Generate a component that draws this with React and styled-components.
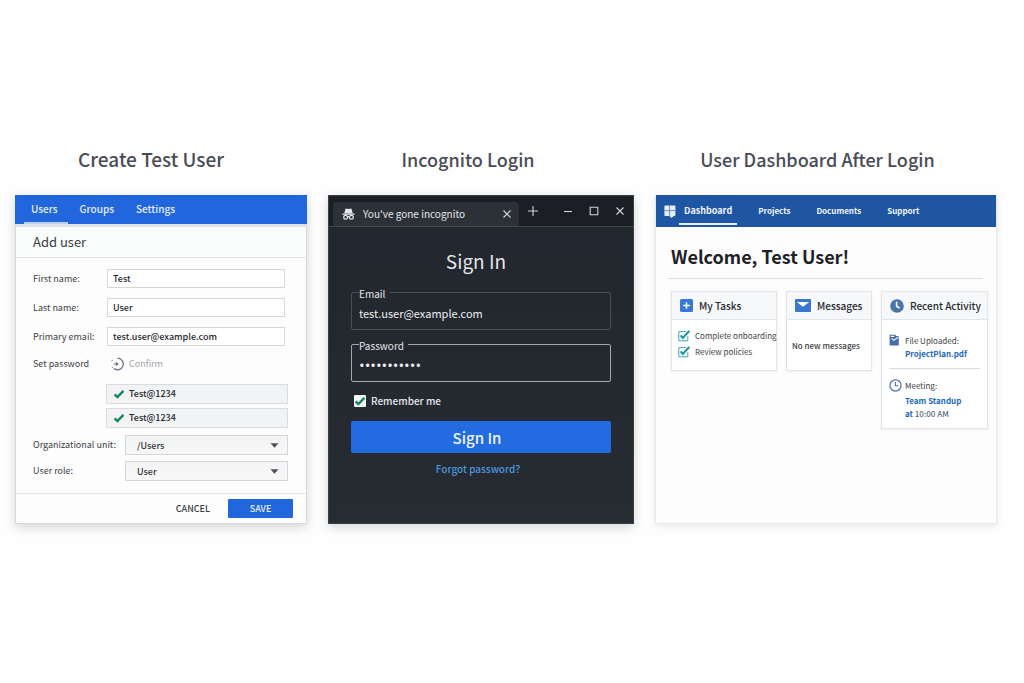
import React, {useState} from 'react'
import styled, {createGlobalStyle} from 'styled-components'

const GlobalStyle = createGlobalStyle`
  * {
    box-sizing: border-box;
  }
  body {
    margin: 0;
    background: #fefefe;
    color: #3c4043;
    font-family: "Noto Sans CJK SC", "Noto Sans", sans-serif;
    font-size: 9px;
    line-height: 16px;
  }
  button, input, select {
    font-family: inherit;
  }
  svg {
    flex-shrink: 0;
  }
`

const Page = styled.main`
  display: grid;
  grid-template-columns: 292fr 306fr 342fr;
  gap: 21px;
  align-items: start;
  min-height: 100vh;
  padding: 143px 27px 40px 15px;
`

const Column = styled.section`
  min-width: 0;
`

const Title = styled.h2`
  margin: 0 0 20px;
  padding-right: ${p => p.$inset}px;
  font-size: ${p => p.$large ? 19 : 18}px;
  font-weight: 500;
  line-height: 32px;
  text-align: center;
  color: #484c56;
`

const Panel = styled.div`
  display: flex;
  flex-direction: column;
  min-height: 329px;
  background: #fdfdfe;
  box-shadow: 0 3px 10px rgba(60, 64, 75, 0.22);
`

/* Admin console */

const AdminTabs = styled.nav`
  display: flex;
  gap: 5px;
  height: 29px;
  padding: 0 9px;
  background: #2166dc;
`

const AdminTab = styled.a`
  padding: 0 10px 0 7px;
  border-bottom: 2px solid ${p => p.$active ? '#b9d2fa' : 'transparent'};
  color: #e6effd;
  font-size: 10px;
  font-weight: 500;
  line-height: 28px;
  text-decoration: none;
`

const AdminBody = styled.form`
  display: flex;
  flex-direction: column;
  flex: 1;
  border: 1px solid #d6d8dc;
  border-top: 3px solid #dfe2e8;
`

const AdminHeading = styled.h3`
  margin: 0;
  padding: 0 17px;
  border-bottom: 1px solid #e1e3e6;
  background: #fafbfb;
  font-size: 13px;
  font-weight: 400;
  line-height: 30px;
`

const Fields = styled.div`
  display: flex;
  flex-direction: column;
  gap: 10px;
  padding: 11px 21px 0 17px;
`

const Field = styled.div`
  display: grid;
  grid-template-columns: 74px 1fr;
  align-items: center;
`

const TextInput = styled.input`
  min-width: 0;
  height: 19px;
  padding: 0 5px;
  border: 1px solid #d5d7da;
  background: #fff;
  color: #26292e;
  font-size: 9px;
  font-weight: 500;
`

const Confirm = styled.span`
  display: flex;
  align-items: center;
  gap: 5px;
  padding-left: 4px;
  color: #a2a5aa;
`

const PasswordList = styled.ul`
  display: flex;
  flex-direction: column;
  gap: 4px;
  margin: 12px 18px 7px 90px;
  padding: 0;
  list-style: none;
`

const PasswordItem = styled.li`
  display: flex;
  align-items: center;
  gap: 4px;
  height: 20px;
  padding: 0 6px;
  border: 1px solid #d9dbde;
  background: #f2f3f4;
  color: #26292e;
  font-weight: 500;
`

const Selects = styled.div`
  display: flex;
  flex-direction: column;
  gap: 6px;
  padding: 0 18px 0 17px;
`

const SelectField = styled.div`
  display: grid;
  grid-template-columns: 92px 1fr;
  align-items: center;
  white-space: nowrap;
`

const SelectBox = styled.div`
  display: grid;
  align-items: center;

  & > * {
    grid-area: 1 / 1;
  }
  svg {
    justify-self: end;
    margin-right: 9px;
    pointer-events: none;
  }
`

const Select = styled.select`
  appearance: none;
  height: 20px;
  padding: 0 24px 0 11px;
  border: 1px solid #d3d5d9;
  border-radius: 0;
  background: linear-gradient(#f3f4f5, #f7f7f8);
  color: #33363b;
  font-size: 9px;
  font-weight: 500;
`

const AdminFooter = styled.div`
  display: flex;
  justify-content: flex-end;
  align-items: center;
  gap: 18px;
  margin-top: auto;
  padding: 5px 13px;
  border-top: 1px solid #e3e5e8;
`

const TextButton = styled.button`
  padding: 0;
  border: 0;
  background: none;
  color: #3c4043;
  font-size: 9px;
  font-weight: 500;
`

const SaveButton = styled.button`
  width: 65px;
  height: 19px;
  padding: 0;
  border: 0;
  border-radius: 1px;
  background: #2166dc;
  color: #e6effd;
  font-size: 9px;
  font-weight: 500;
  line-height: 19px;
`

/* Incognito window */

const Browser = styled(Panel)`
  border: 1px solid #3a3f45;
  background: linear-gradient(#22262e, #262c31);
  color: #e4e6e9;
`

const TitleBar = styled.div`
  display: flex;
  align-items: center;
  height: 31px;
  padding-right: 8px;
  padding-left: 4px;
  border-bottom: 1px solid #41464c;
  background: #1b1e23;
`

const BrowserTab = styled.div`
  display: flex;
  align-items: center;
  gap: 8px;
  flex: 1;
  align-self: flex-end;
  height: 24px;
  padding: 0 7px 0 9px;
  border-radius: 4px 4px 0 0;
  background: #2c3138;
  font-size: 10px;

  span {
    flex: 1;
  }
`

const IconButton = styled.button`
  display: flex;
  padding: 0;
  border: 0;
  background: none;
  color: #d3d6da;
`

const NewTab = styled(IconButton)`
  margin: 0 25px 0 9px;
`

const WindowControls = styled.div`
  display: flex;
  align-items: center;
  gap: 16px;
`

const LoginForm = styled.form`
  display: flex;
  flex-direction: column;
  padding: 18px 22px 0;
`

const LoginHeading = styled.h3`
  margin: 0 0 11px;
  padding-right: 10px;
  font-size: 19px;
  font-weight: 400;
  line-height: 32px;
  text-align: center;
`

const Outlined = styled.fieldset`
  min-width: 0;
  height: 42px;
  margin: 0 0 10px;
  padding: 0 7px;
  border: 1px solid ${p => p.$active ? '#a3a6aa' : '#4a4f55'};
  border-radius: 2px;

  legend {
    height: 8px;
    padding: 0 4px 0 0;
    font-size: 10px;
    line-height: 12px;
  }
  input {
    display: block;
    width: 100%;
    height: 34px;
    padding: 0;
    border: 0;
    outline: 0;
    background: none;
    color: #eceef0;
    font-size: 11px;
  }
  input[type='password'] {
    font-family: "Open Sans", sans-serif;
    font-size: 15px;
  }
`

const Remember = styled.label`
  display: flex;
  align-items: center;
  gap: 5px;
  margin-top: 1px;
  margin-left: 3px;
  font-size: 10px;
  font-weight: 500;
`

const CheckBox = styled.span`
  display: grid;

  & > * {
    grid-area: 1 / 1;
  }
  input {
    appearance: none;
    width: 12px;
    height: 12px;
    margin: 0;
    border-radius: 1px;
    background: #f4f6f6;
  }
  svg {
    pointer-events: none;
    visibility: hidden;
  }
  input:checked + svg {
    visibility: visible;
  }
`

const SignInButton = styled.button`
  height: 32px;
  margin-top: 12px;
  padding: 0 8px 0 0;
  border: 0;
  border-radius: 2px;
  background: #226be0;
  color: #f0f5fd;
  font-size: 15px;
  font-weight: 500;
`

const ForgotLink = styled.a`
  align-self: center;
  margin-top: 8px;
  margin-right: 6px;
  color: #4b97df;
  font-size: 10px;
  font-weight: 500;
  text-decoration: none;
`

/* Dashboard */

const Dashboard = styled(Panel)`
  border: 1px solid #e6e8eb;
  border-top: 0;
  box-shadow: 0 2px 8px rgba(60, 64, 75, 0.12);
`

const DashNav = styled.nav`
  display: flex;
  align-items: center;
  height: 32px;
  padding-left: 8px;
  background: #1f56a3;
`

const DashLinks = styled.div`
  display: flex;
  gap: 16px;
  padding-left: 3px;
`

const DashLink = styled.a`
  height: 28px;
  padding: 0 5px;
  border-bottom: 2px solid ${p => p.$active ? '#e8eff8' : 'transparent'};
  color: #f0f5fb;
  font-size: ${p => p.$active ? 9 : 8}px;
  font-weight: 700;
  line-height: 28px;
  text-decoration: none;
`

const Welcome = styled.h1`
  margin: 0 13px 0 12px;
  padding: 13px 3px 6px;
  border-bottom: 1px solid #d8dadd;
  color: #1e2125;
  font-size: 18px;
  font-weight: 700;
  line-height: 32px;
`

const Cards = styled.div`
  display: grid;
  grid-template-columns: 106fr 86fr 107fr;
  gap: 9px;
  align-items: start;
  padding: 12px 8px 20px 15px;
`

const Card = styled.article`
  min-width: 0;
  border: 1px solid #e1e4e8;
  background: #fff;
  box-shadow: 0 1px 2px rgba(60, 64, 75, 0.08);
  font-size: 8px;
  white-space: nowrap;
`

const CardHeader = styled.h3`
  display: flex;
  align-items: center;
  gap: 6px;
  height: 28px;
  margin: 0;
  padding: 0 8px;
  border-bottom: 1px solid #e1e4e8;
  background: #f6f8fa;
  color: #25282d;
  font-size: 10px;
  font-weight: 500;
`

const TaskList = styled.ul`
  height: 50px;
  margin: 0;
  padding: 8px 0 0 6px;
  list-style: none;
`

const Task = styled.label`
  display: flex;
  align-items: center;
  gap: 5px;
`

const TaskCheck = styled(CheckBox)`
  input {
    background: none;
  }
`

const Empty = styled.p`
  height: 50px;
  margin: 0;
  padding: 18px 5px;
  font-weight: 500;
`

const Activity = styled.div`
  display: grid;
  grid-template-columns: 12px 1fr;
  column-gap: 4px;
  margin: 0 7px;
  padding: 14px 0 8px;
  line-height: 13px;

  & + & {
    padding-top: 10px;
    border-top: 1px solid #d8dadd;
  }
  & + & a {
    margin-top: 2px;
  }
  a {
    display: block;
    color: #1c69bd;
    font-weight: 700;
    text-decoration: none;
  }
  time {
    color: #566a84;
    font-weight: 500;
  }
`

const CheckMark = ({size = 12, color = '#16875c'}) => (
    <svg width={size} height={size} viewBox="0 0 12 12" aria-hidden="true">
        <path d="M1.6 6.4 4.4 9 10.4 2.8" fill="none" stroke={color} strokeWidth="2.4"/>
    </svg>
)

const Caret = () => (
    <svg width="9" height="5" viewBox="0 0 9 5" aria-hidden="true">
        <path d="M0.5 0.3h8L4.5 4.8z" fill="#4e5156"/>
    </svg>
)

const ConfirmIcon = () => (
    <svg width="13" height="14" viewBox="0 0 13 14" aria-hidden="true">
        <g fill="none" stroke="#666c80" strokeWidth="1.2">
            <path d="M6.5 1.2a5.8 5.8 0 1 1-3.6 10.4"/>
            <path d="M1 9.6a5.8 5.8 0 0 0 1.2 1.6M0.8 4.4a5.8 5.8 0 0 1 .9-1.6" strokeWidth="1"/>
            <path d="M2.6 7h4M5.2 5.4 6.8 7 5.2 8.6"/>
        </g>
    </svg>
)

const IncognitoIcon = () => (
    <svg width="13" height="12" viewBox="0 0 13 12" aria-hidden="true">
        <path d="M3.6.6 6.5 1 9.4.6l1.4 4.8H2.2z" fill="#e6e8ea"/>
        <path d="M.4 5.6h12.2v1.2H.4z" fill="#e6e8ea"/>
        <g fill="none" stroke="#e6e8ea" strokeWidth="1.2">
            <circle cx="3.6" cy="9.3" r="1.9"/>
            <circle cx="9.4" cy="9.3" r="1.9"/>
            <path d="M5.4 9q1.1-.8 2.2 0"/>
        </g>
    </svg>
)

const GLYPHS = {
    close: 'M1.5 1.5l7 7M8.5 1.5l-7 7',
    plus: 'M5 0v10M0 5h10',
    minimize: 'M1 5.5h8',
    maximize: 'M1.2 1.2h7.6v7.6H1.2z',
}

const Glyph = ({name}) => (
    <svg width="10" height="10" viewBox="0 0 10 10" aria-hidden="true">
        <path d={GLYPHS[name]} fill="none" stroke="currentColor" strokeWidth="1.1"/>
    </svg>
)

const Logo = () => (
    <svg width="12" height="13" viewBox="0 0 12 13" aria-hidden="true">
        <rect x=".4" y=".4" width="11" height="10.6" rx="1" fill="#e6eef8"/>
        <path d="M4.4 10h6.2L7.6 13z" fill="#e6eef8"/>
        <path d="M5.6 0v11M0 5.6h11.4" stroke="#5b86c0" strokeWidth=".9"/>
    </svg>
)

const PlusTile = () => (
    <svg width="13" height="13" viewBox="0 0 13 13" aria-hidden="true">
        <rect width="13" height="13" rx="1.5" fill="#3a78d6"/>
        <path d="M6.5 3.2v6.6M3.2 6.5h6.6" stroke="#fff" strokeWidth="1.4"/>
    </svg>
)

const Envelope = () => (
    <svg width="16" height="13" viewBox="0 0 16 13" aria-hidden="true">
        <rect width="16" height="13" rx="1" fill="#3a78d0"/>
        <path d="M1.8 3h12.4L8 7.8z" fill="#fff"/>
    </svg>
)

const ClockSolid = () => (
    <svg width="14" height="14" viewBox="0 0 14 14" aria-hidden="true">
        <circle cx="7" cy="7" r="6.8" fill="#4a74ab"/>
        <path d="M6.6 2.8v4.4l3 1.8" fill="none" stroke="#fff" strokeWidth="1.6"/>
    </svg>
)

const ClockOutline = () => (
    <svg width="13" height="13" viewBox="0 0 13 13" aria-hidden="true">
        <circle cx="6.5" cy="6.5" r="5.6" fill="none" stroke="#4d6f9f" strokeWidth="1.2"/>
        <path d="M6.4 3v3.8h3" fill="none" stroke="#4d6f9f" strokeWidth="1.1"/>
    </svg>
)

const FileIcon = () => (
    <svg width="11" height="12" viewBox="0 0 11 12" aria-hidden="true">
        <path d="M.6.8h5.6l1 1.2h2.6v9.4H.6z" fill="#466ea6"/>
        <path d="M1.8 2.4h3.4M2.6 4.4l2.2 2L9.4 3" fill="none" stroke="#fff" strokeWidth="1.1"/>
    </svg>
)

const TaskMark = () => (
    <svg width="12" height="12" viewBox="0 0 12 12" aria-hidden="true">
        <path d="M8.4 1.6H.8v9.2h9V6.2" fill="none" stroke="#3fa9b4" strokeWidth="1"/>
        <path d="M2.6 5.4 4.8 8 11.4 1" fill="none" stroke="#16959f" strokeWidth="2"/>
    </svg>
)

const AdminPanel = () => {
    const [unit, setUnit] = useState('/Users')
    const [role, setRole] = useState('User')

    return (
        <Panel>
            <AdminTabs>
                <AdminTab href="#users" $active>Users</AdminTab>
                <AdminTab href="#groups">Groups</AdminTab>
                <AdminTab href="#settings">Settings</AdminTab>
            </AdminTabs>
            <AdminBody onSubmit={e => e.preventDefault()}>
                <AdminHeading>Add user</AdminHeading>
                <Fields>
                    <Field>
                        <label htmlFor="first">First name:</label>
                        <TextInput id="first" defaultValue="Test"/>
                    </Field>
                    <Field>
                        <label htmlFor="last">Last name:</label>
                        <TextInput id="last" defaultValue="User"/>
                    </Field>
                    <Field>
                        <label htmlFor="primary">Primary email:</label>
                        <TextInput id="primary" defaultValue="test.user@example.com"/>
                    </Field>
                    <Field>
                        <span>Set password</span>
                        <Confirm><ConfirmIcon/>Confirm</Confirm>
                    </Field>
                </Fields>
                <PasswordList>
                    <PasswordItem><CheckMark/>Test@1234</PasswordItem>
                    <PasswordItem><CheckMark/>Test@1234</PasswordItem>
                </PasswordList>
                <Selects>
                    <SelectField>
                        <label htmlFor="unit">Organizational unit:</label>
                        <SelectBox>
                            <Select id="unit" value={unit} onChange={e => setUnit(e.target.value)}>
                                <option>/Users</option>
                            </Select>
                            <Caret/>
                        </SelectBox>
                    </SelectField>
                    <SelectField>
                        <label htmlFor="role">User role:</label>
                        <SelectBox>
                            <Select id="role" value={role} onChange={e => setRole(e.target.value)}>
                                <option>User</option>
                            </Select>
                            <Caret/>
                        </SelectBox>
                    </SelectField>
                </Selects>
                <AdminFooter>
                    <TextButton type="button">CANCEL</TextButton>
                    <SaveButton type="submit">SAVE</SaveButton>
                </AdminFooter>
            </AdminBody>
        </Panel>
    )
}

const LoginPanel = () => {
    const [remember, setRemember] = useState(true)

    return (
        <Browser>
            <TitleBar>
                <BrowserTab>
                    <IncognitoIcon/>
                    <span>You've gone incognito</span>
                    <IconButton aria-label="Close tab"><Glyph name="close"/></IconButton>
                </BrowserTab>
                <NewTab aria-label="New tab"><Glyph name="plus"/></NewTab>
                <WindowControls>
                    <IconButton aria-label="Minimize"><Glyph name="minimize"/></IconButton>
                    <IconButton aria-label="Maximize"><Glyph name="maximize"/></IconButton>
                    <IconButton aria-label="Close"><Glyph name="close"/></IconButton>
                </WindowControls>
            </TitleBar>
            <LoginForm onSubmit={e => e.preventDefault()}>
                <LoginHeading>Sign In</LoginHeading>
                <Outlined>
                    <legend><label htmlFor="email">Email</label></legend>
                    <input id="email" type="email" defaultValue="test.user@example.com"/>
                </Outlined>
                <Outlined $active>
                    <legend><label htmlFor="password">Password</label></legend>
                    <input id="password" type="password" defaultValue="Test@123456"/>
                </Outlined>
                <Remember>
                    <CheckBox>
                        <input type="checkbox" checked={remember} onChange={e => setRemember(e.target.checked)}/>
                        <CheckMark/>
                    </CheckBox>
                    Remember me
                </Remember>
                <SignInButton type="submit">Sign In</SignInButton>
                <ForgotLink href="#forgot">Forgot password?</ForgotLink>
            </LoginForm>
        </Browser>
    )
}

const tasks = ['Complete onboarding', 'Review policies']

const DashboardPanel = () => (
    <Dashboard>
        <DashNav>
            <Logo/>
            <DashLinks>
                <DashLink href="#dashboard" $active>Dashboard</DashLink>
                <DashLink href="#projects">Projects</DashLink>
                <DashLink href="#documents">Documents</DashLink>
                <DashLink href="#support">Support</DashLink>
            </DashLinks>
        </DashNav>
        <Welcome>Welcome, Test User!</Welcome>
        <Cards>
            <Card>
                <CardHeader><PlusTile/>My Tasks</CardHeader>
                <TaskList>
                    {tasks.map(task => (
                        <li key={task}>
                            <Task>
                                <TaskCheck>
                                    <input type="checkbox" defaultChecked/>
                                    <TaskMark/>
                                </TaskCheck>
                                {task}
                            </Task>
                        </li>
                    ))}
                </TaskList>
            </Card>
            <Card>
                <CardHeader><Envelope/>Messages</CardHeader>
                <Empty>No new messages</Empty>
            </Card>
            <Card>
                <CardHeader><ClockSolid/>Recent Activity</CardHeader>
                <Activity>
                    <FileIcon/>
                    <div>
                        File Uploaded:
                        <a href="#plan">ProjectPlan.pdf</a>
                    </div>
                </Activity>
                <Activity>
                    <ClockOutline/>
                    <div>
                        Meeting:
                        <a href="#standup">Team Standup<br/>at <time>10:00 AM</time></a>
                    </div>
                </Activity>
            </Card>
        </Cards>
    </Dashboard>
)

const App = () => (
    <>
        <GlobalStyle/>
        <Page>
            <Column>
                <Title $inset={20} $large>Create Test User</Title>
                <AdminPanel/>
            </Column>
            <Column>
                <Title $inset={26}>Incognito Login</Title>
                <LoginPanel/>
            </Column>
            <Column>
                <Title $inset={17}>User Dashboard After Login</Title>
                <DashboardPanel/>
            </Column>
        </Page>
    </>
)

export default App
